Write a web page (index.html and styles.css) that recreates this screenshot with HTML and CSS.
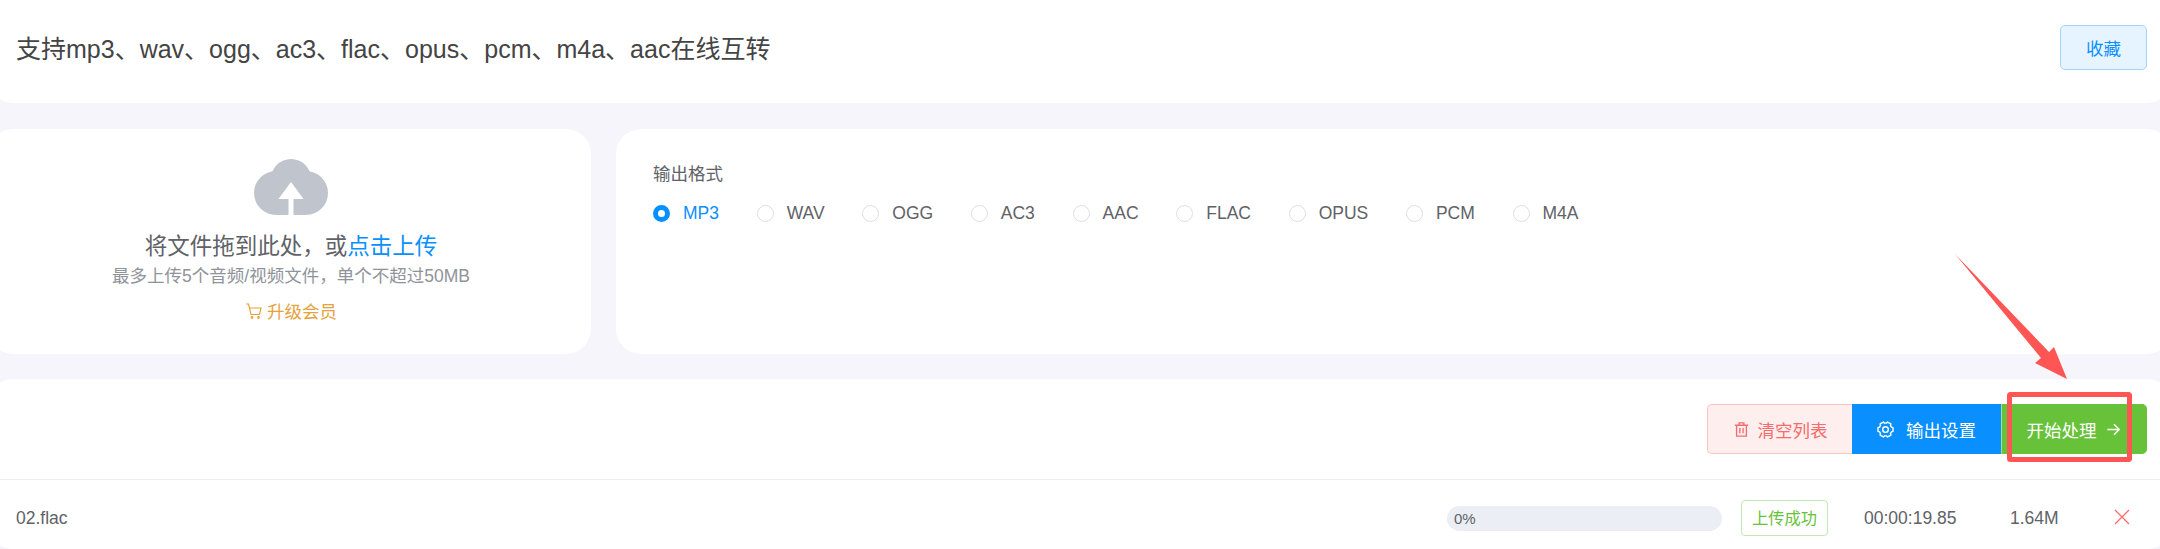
FILE: index.html
```html
<!DOCTYPE html>
<html lang="zh-CN">

<head>
    <meta charset="UTF-8">
    <meta name="viewport" content="width=device-width, initial-scale=1.0">
    <title>音频格式转换</title>
    <link rel="stylesheet" href="styles.css">
</head>

<body>
    <div class="page">
        <div class="card title-card">
            <h1 class="page-title">支持mp3、wav、ogg、ac3、flac、opus、pcm、m4a、aac在线互转</h1>
            <button class="collect-btn">收藏</button>
        </div>

        <div class="middle-row">
            <div class="card upload-card">
                <svg class="cloud-icon" viewBox="0 0 74 56">
                    <circle cx="37" cy="20" r="20" fill="#c0c4cc"></circle>
                    <circle cx="22" cy="34" r="22" fill="#c0c4cc"></circle>
                    <circle cx="52" cy="34" r="22" fill="#c0c4cc"></circle>
                    <rect x="22" y="30" width="30" height="26" fill="#c0c4cc"></rect>
                    <path d="M37 23 L49.5 40 L39.5 40 L39.5 56 L34.5 56 L34.5 40 L24.5 40 Z" fill="#fff"></path>
                </svg>
                <div class="upload-text">将文件拖到此处，或<span class="upload-link">点击上传</span></div>
                <div class="upload-tip">最多上传5个音频/视频文件，单个不超过50MB</div>
                <div class="upgrade">
                    <svg class="cart-icon" viewBox="0 0 18 18" fill="none" stroke="#e6a23c" stroke-width="1.2">
                        <path d="M1 2 H3.5 L6 12.5 H14.5 L16 6 H4.5"></path>
                        <circle cx="7" cy="15.5" r="0.8"></circle>
                        <circle cx="13.5" cy="15.5" r="0.8"></circle>
                    </svg>
                    <span>升级会员</span>
                </div>
            </div>

            <div class="card settings-card">
                <div class="settings-label">输出格式</div>
                <div class="radio-group">
                    <div class="radio checked"><span class="radio-dot"></span>MP3</div>
                    <div class="radio"><span class="radio-dot"></span>WAV</div>
                    <div class="radio"><span class="radio-dot"></span>OGG</div>
                    <div class="radio"><span class="radio-dot"></span>AC3</div>
                    <div class="radio"><span class="radio-dot"></span>AAC</div>
                    <div class="radio"><span class="radio-dot"></span>FLAC</div>
                    <div class="radio"><span class="radio-dot"></span>OPUS</div>
                    <div class="radio"><span class="radio-dot"></span>PCM</div>
                    <div class="radio"><span class="radio-dot"></span>M4A</div>
                </div>
            </div>
        </div>

        <div class="card list-card">
            <div class="toolbar">
                <div class="btn-group">
                    <button class="btn btn-clear">
                        <svg class="btn-icon" viewBox="0 0 18 18" fill="none" stroke="currentColor" stroke-width="1.4">
                            <path d="M2 4.5 H16 M6.5 4.5 V2 H11.5 V4.5 M3.8 4.5 V16 H14.2 V4.5 M7.3 7.5 V13 M10.7 7.5 V13"></path>
                        </svg>
                        清空列表
                    </button>
                    <button class="btn btn-setting">
                        <svg class="btn-icon" viewBox="0 0 18 18" fill="none" stroke="currentColor" stroke-width="1.5">
                            <path d="M15.3 6.45 L16.96 7.02 V10.98 L15.3 11.55 L14.36 13.19 L14.7 14.9 L11.26 16.88 L9.95 15.73 H8.05 L6.74 16.88 L3.3 14.9 L3.64 13.19 L2.7 11.55 L1.04 10.98 V7.02 L2.7 6.45 L3.64 4.81 L3.3 3.1 L6.74 1.12 L8.05 2.27 H9.95 L11.26 1.12 L14.7 3.1 L14.36 4.81 Z" stroke-linejoin="round"></path>
                            <circle cx="9" cy="9" r="3"></circle>
                        </svg>
                        输出设置
                    </button>
                    <button class="btn btn-start">
                        开始处理
                        <svg class="btn-icon" viewBox="0 0 18 18" fill="none" stroke="currentColor" stroke-width="1.5">
                            <path d="M2.5 9 H15 M9.5 3.5 L15 9 L9.5 14.5"></path>
                        </svg>
                    </button>
                </div>
            </div>
            <div class="file-row">
                <span class="file-name">02.flac</span>
                <div class="progress"><span class="progress-text">0%</span></div>
                <span class="status-tag">上传成功</span>
                <span class="file-time">00:00:19.85</span>
                <span class="file-size">1.64M</span>
                <svg class="remove-icon" viewBox="0 0 16 16" fill="none" stroke="#f56c6c" stroke-width="1.3">
                    <path d="M1 1 L15 15 M15 1 L1 15"></path>
                </svg>
            </div>
        </div>
    </div>

    <!-- 标注：红色箭头和方框 -->
    <svg class="annotation" viewBox="0 0 2160 549">
        <path d="M1955 254 L2049 352 L2054 347 L2067 379 L2035 363 L2041 358 Z" fill="#ff5555"></path>
        <rect x="2009.5" y="394.5" width="120" height="65" rx="1" fill="none" stroke="#ff5555" stroke-width="5"></rect>
    </svg>
</body>

</html>
```

FILE: styles.css
```css
html, body {
    height: 100%;
}
body {
    font-family: "Liberation Sans", "Noto Sans CJK SC", Arial, sans-serif;
    margin: 0;
    background-color: #f5f5fb;
    color: #606266;
    overflow: hidden;
    position: relative;
}
.page {
    margin: 0 -12px;
}
.card {
    background-color: white;
    border-radius: 25px;
}
.title-card {
    height: 103px;
    padding: 0 25px 9px 28px;
    box-sizing: border-box;
    display: flex;
    align-items: center;
    justify-content: space-between;
    border-radius: 0 0 25px 25px;
}
.page-title {
    margin: 0;
    font-size: 25px;
    font-weight: normal;
    color: #444;
}
.collect-btn {
    width: 87px;
    height: 45px;
    font-family: inherit;
    font-size: 17.5px;
    color: #0a8fff;
    background-color: #e6f4ff;
    border: 1px solid #a3d3ff;
    border-radius: 5px;
}
.middle-row {
    display: flex;
    gap: 25px;
    margin-top: 26px;
    height: 225px;
}
.upload-card {
    width: 603px;
    padding-top: 30px;
    box-sizing: border-box;
    display: flex;
    flex-direction: column;
    align-items: center;
}
.cloud-icon {
    width: 74px;
    height: 56px;
    margin-left: 3px;
}
.upload-text {
    font-size: 22.5px;
    margin-top: 17px;
    line-height: 30px;
    margin-left: 3px;
}
.upload-link {
    color: #0a8fff;
}
.upload-tip {
    font-size: 17.5px;
    color: #909399;
    line-height: 24px;
    margin-top: 2px;
    margin-left: 3px;
}
.upgrade {
    display: flex;
    align-items: center;
    gap: 4px;
    margin-top: 10px;
    margin-left: 3px;
    font-size: 17.5px;
    color: #e6a23c;
}
.cart-icon {
    width: 18px;
    height: 18px;
}
.settings-card {
    flex: 1;
    padding: 33px 37px;
}
.settings-label {
    font-size: 17.5px;
    line-height: 24px;
}
.radio-group {
    display: flex;
    gap: 37.7px;
    margin-top: 15px;
}
.radio {
    display: flex;
    align-items: center;
    gap: 13px;
    font-size: 17.5px;
    line-height: 24px;
}
.radio-dot {
    width: 17px;
    height: 17px;
    box-sizing: border-box;
    border: 1px solid #dcdfe6;
    border-radius: 50%;
}
.radio.checked {
    color: #0a8fff;
}
.radio.checked .radio-dot {
    border: 5.5px solid #0a8fff;
}
.list-card {
    margin-top: 25px;
    height: 170px;
}
.toolbar {
    height: 101px;
    box-sizing: border-box;
    padding: 25px 25px 0 0;
    border-bottom: 1px solid #ebeef5;
    display: flex;
    justify-content: flex-end;
}
.btn-group {
    display: flex;
    height: 50px;
}
.btn {
    font-family: inherit;
    font-size: 17.5px;
    color: white;
    border: 1px solid transparent;
    display: flex;
    align-items: center;
    justify-content: center;
    gap: 8px;
    padding: 0;
}
.btn-icon {
    width: 17px;
    height: 17px;
}
.btn-clear {
    width: 145px;
    color: #f56c6c;
    background-color: #ffeeee;
    border-color: #fbc4c4;
    border-right: none;
    border-radius: 5px 0 0 5px;
}
.btn-setting {
    width: 149px;
    gap: 12px;
    background-color: #0a8fff;
    border-color: #0a8fff;
}
.btn-start {
    width: 146px;
    background-color: #67c23a;
    border-color: #67c23a;
    border-left-color: #a6e08a;
    border-radius: 0 5px 5px 0;
}
.file-row {
    display: flex;
    align-items: center;
    height: 76px;
    padding-left: 28px;
    font-size: 17.5px;
}
.file-name {
    width: 1431px;
}
.progress {
    width: 275px;
    height: 25px;
    line-height: 25px;
    background-color: #ebeef5;
    border-radius: 13px;
    font-size: 15px;
}
.progress-text {
    margin-left: 7px;
}
.status-tag {
    margin-left: 19px;
    width: 87px;
    height: 36px;
    line-height: 34px;
    box-sizing: border-box;
    text-align: center;
    font-size: 16.25px;
    color: #67c23a;
    border: 1px solid #c2e7b0;
    border-radius: 4px;
}
.file-time {
    margin-left: 36px;
    width: 146px;
}
.file-size {
    width: 104px;
}
.remove-icon {
    width: 16px;
    height: 16px;
    margin-bottom: 3px;
}
.annotation {
    position: absolute;
    left: 0;
    top: 0;
    width: 2160px;
    height: 549px;
}
```
